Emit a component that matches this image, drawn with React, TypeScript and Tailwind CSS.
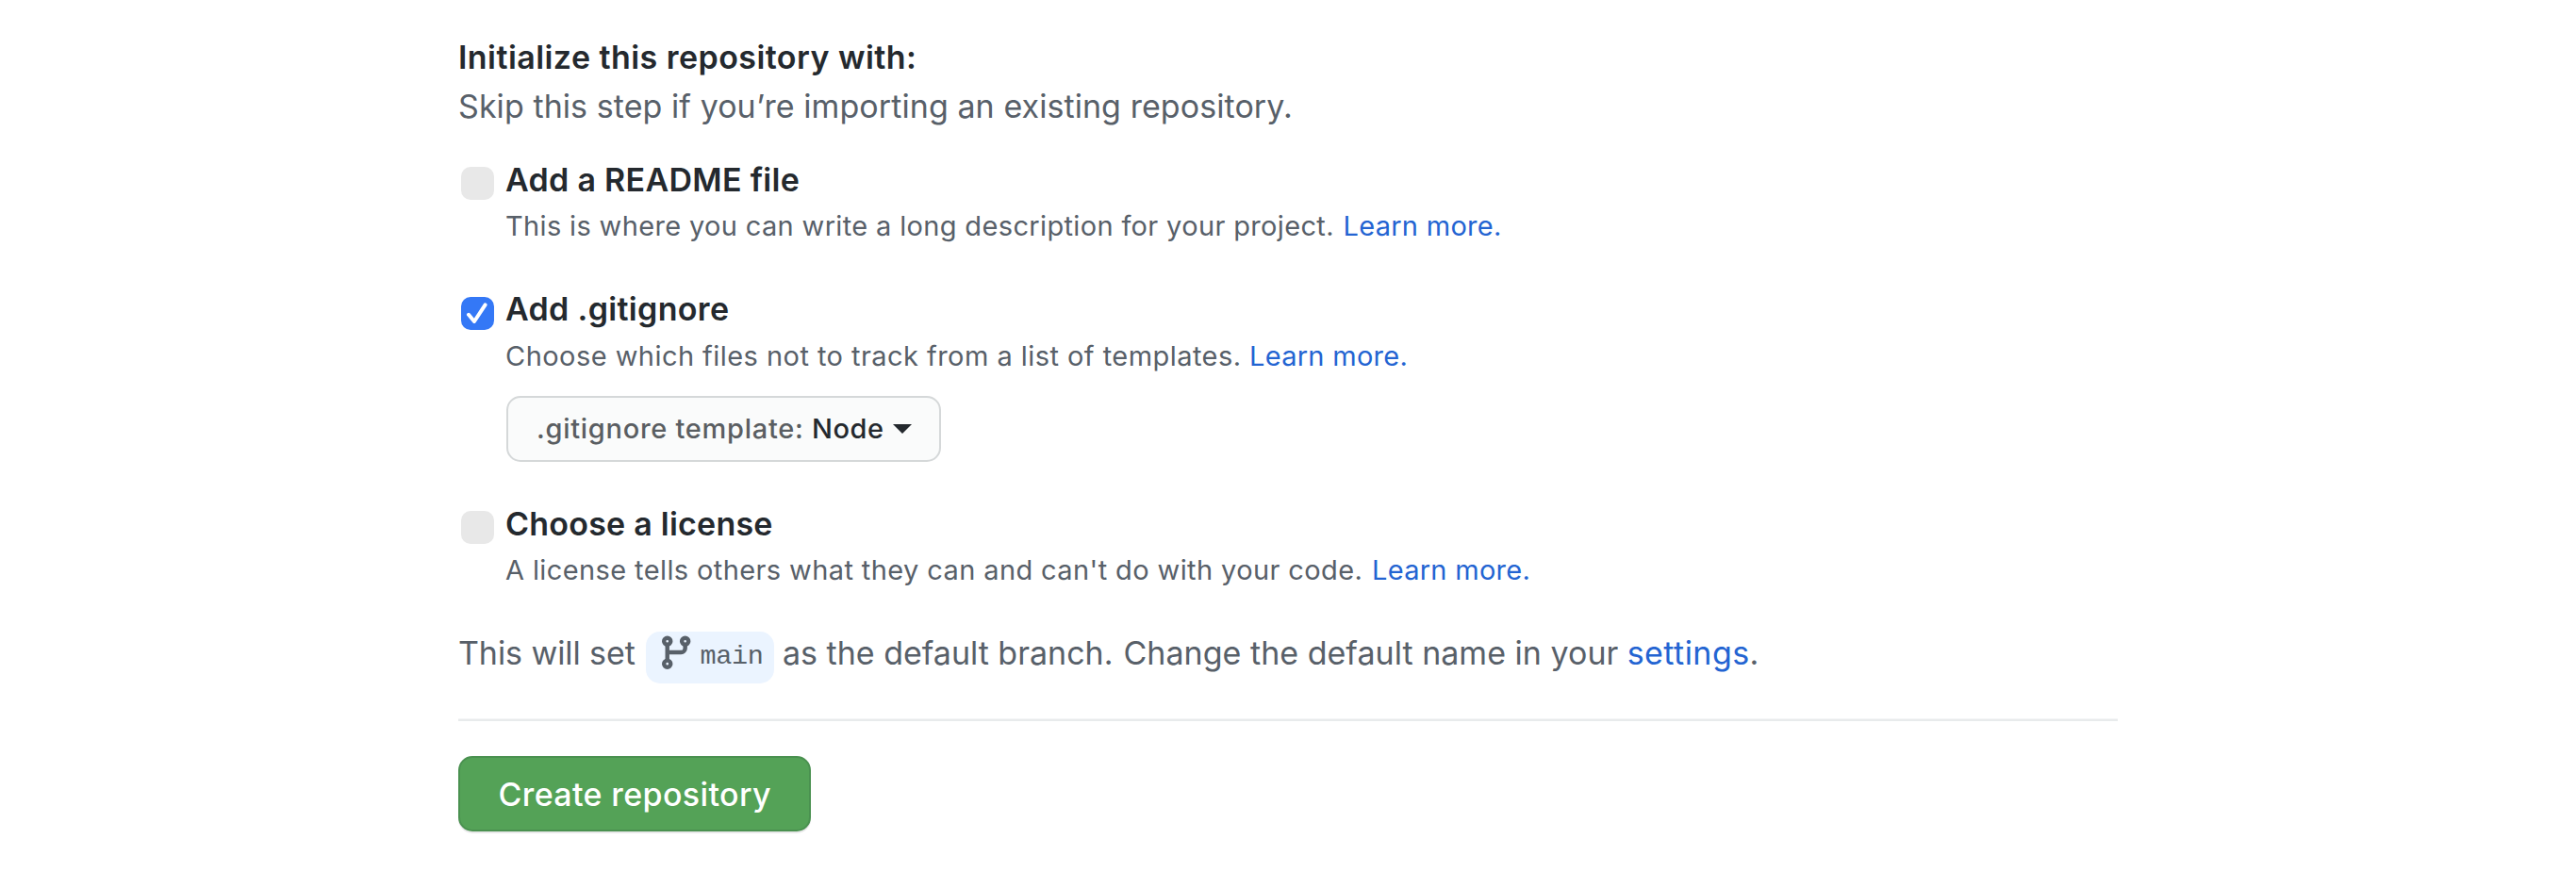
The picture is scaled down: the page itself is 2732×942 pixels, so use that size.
type OptionProps = {
  title: string;
  titleClass: string;
  description: string;
  descriptionClass: string;
  boxClass: string;
  gapClass: string;
  checked?: boolean;
  children?: React.ReactNode;
};

function Checkbox({ checked, className }: { checked?: boolean; className: string }) {
  return (
    <span
      role="checkbox"
      aria-checked={!!checked}
      className={`block h-[35px] w-[35px] shrink-0 rounded-[10px] ${checked ? 'bg-[#3478f6]' : 'bg-[#e8e8e8]'} ${className}`}
    >
      {checked && (
        <svg viewBox="0 0 35 35" className="block h-full w-full" fill="none" stroke="#fff" strokeWidth="4" strokeLinecap="round" strokeLinejoin="round">
          <path d="M8 18.8L14 26L25.6 8.4" />
        </svg>
      )}
    </span>
  );
}

function BranchIcon() {
  return (
    <svg viewBox="0 0 16 16" className="mt-[2px] h-[40.4px] w-[40.4px] shrink-0" fill="none" stroke="#586069" strokeWidth="1.75">
      <circle cx="4.25" cy="3.25" r="1.4" />
      <circle cx="11.75" cy="3.25" r="1.4" />
      <circle cx="4.25" cy="12.75" r="1.4" />
      <path d="M4.25 4.9v6.2M4.25 7.95H10A1.75 1.75 0 0 0 11.75 6.2V4.9" />
    </svg>
  );
}

function Option({ title, titleClass, description, descriptionClass, boxClass, gapClass, checked, children }: OptionProps) {
  return (
    <div className="flex items-start pl-[3px]">
      <Checkbox checked={checked} className={boxClass} />
      <div className="ml-[12px] flex flex-col items-start">
        <label className={`h-[51px] text-[34px] leading-[51px] font-semibold text-[#24292e] ${titleClass}`}>{title}</label>
        <p className={`flex h-[45px] text-[29px] leading-[45px] text-[#586069] ${gapClass}`}>
          <span className={descriptionClass}>{description}</span>
          <a className="tracking-[0.283px] text-[#2364d2]">Learn more.</a>
        </p>
        {children}
      </div>
    </div>
  );
}

export default function App() {
  return (
    <main className="h-[942px] w-[2732px] overflow-hidden bg-white pt-[35px] pl-[486px] font-['Inter',sans-serif] whitespace-nowrap">
      <div className="w-[1760px]">
        <h2 className="h-[51px] text-[34px] leading-[51px] font-semibold tracking-[0.442px] text-[#24292e]">
          Initialize this repository with:
        </h2>
        <p className="mt-px h-[51px] text-[34px] leading-[51px] tracking-[0.07px] text-[#586069]">
          Skip this step if you’re importing an existing repository.
        </p>

        <div className="mt-[27px]">
          <Option
            title="Add a README file"
            titleClass="tracking-[0.29px]"
            description="This is where you can write a long description for your project."
            descriptionClass="w-[888.5px] tracking-[0.345px]"
            boxClass="mt-[12px]"
            gapClass="mt-px"
          />
        </div>

        <div className="mt-[40px]">
          <Option
            checked
            title="Add .gitignore"
            titleClass="tracking-[0.33px]"
            description="Choose which files not to track from a list of templates."
            descriptionClass="w-[789px] tracking-[0.45px]"
            boxClass="mt-[13px]"
            gapClass="mt-[2px]"
          >
            <button className="mt-[20px] ml-[0.5px] flex h-[70px] w-[461.5px] items-start rounded-[15px] border-2 border-[#d5d8d9] bg-[#fafbfb] pt-[10px] pl-[30.5px] text-[29px] leading-[45px] font-medium">
              <span className="w-[292px] text-left tracking-[0.721px] text-[#5a5e62]">.gitignore template:</span>
              <span className="w-[85.5px] text-left tracking-[0.541px] text-[#24292e]">Node</span>
              <svg viewBox="0 0 20 10" className="mt-[18px] h-[10px] w-[20px]" fill="#24292e">
                <path d="M0 0h20L10 10z" />
              </svg>
            </button>
          </Option>
        </div>

        <div className="mt-[40px]">
          <Option
            title="Choose a license"
            titleClass="tracking-[0.23px]"
            description="A license tells others what they can and can't do with your code."
            descriptionClass="w-[919px] tracking-[0.39px]"
            boxClass="mt-[12px]"
            gapClass="mt-px"
          />
        </div>

        <p className="mt-[40px] flex h-[58px] items-start text-[34px] leading-[51px] text-[#586069]">
          <span className="w-[199px] tracking-[-0.08px]">This will set</span>
          <span className="mt-[3px] flex h-[55px] w-[136px] items-start rounded-[15px] bg-[#ebf4ff] pl-[12px]">
            <BranchIcon />
            <code className="mt-[10px] ml-[5px] font-['Liberation_Mono',monospace] text-[28.5px] leading-[34px] tracking-[-0.3px]">main</code>
          </span>
          <span className="ml-[9px] w-[361.5px] tracking-[-0.01px]">as the default branch.</span>
          <span className="w-[534.2px] tracking-[0.019px]">Change the default name in your</span>
          <a className="tracking-[0.449px] text-[#2364d2]">settings</a>
          <span>.</span>
        </p>

        <hr className="mt-[37px] h-[3px] border-0 border-t border-[#f4f5f6] bg-[#e8ebec]" />

        <button className="mt-[37px] flex h-[80px] w-[374px] items-start rounded-[15px] border-2 border-[#4a9150] bg-[#54a257] pt-[13px] pl-[40.5px] text-[34px] leading-[51px] font-medium tracking-[0.36px] text-white shadow-[0_2px_0_rgba(27,31,35,0.1)]">
          Create repository
        </button>
      </div>
    </main>
  );
}
